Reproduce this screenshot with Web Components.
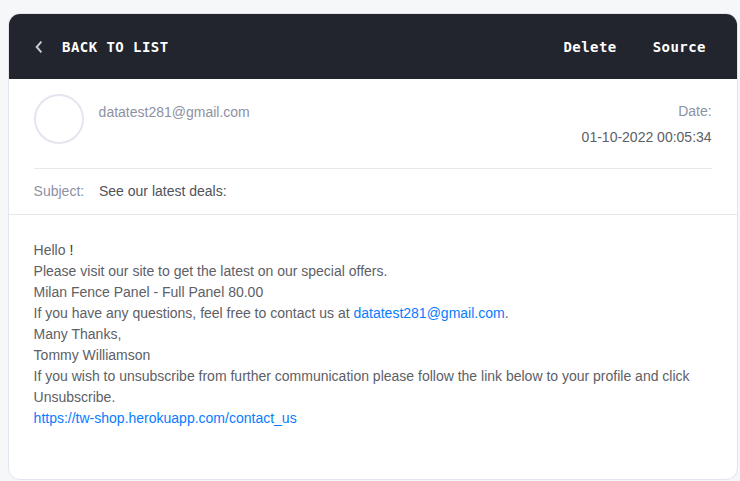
<!DOCTYPE html>
<html lang="en"><head><meta charset="utf-8"><title>Message</title>
<style>
html{height:100%;background:#f5f7f9}
body{margin:0;height:481px;overflow:hidden;padding:13px 2px 1px 8px;box-sizing:border-box;font:14px/21px "Liberation Sans",Arial,sans-serif;color:#5d6066}
</style></head><body>
<mail-card>
<mail-toolbar slot="toolbar"><span>BACK TO LIST</span><span slot="action">Delete</span><span slot="action">Source</span></mail-toolbar>
<mail-meta slot="meta"><span slot="from">datatest281@gmail.com</span><span slot="date">01-10-2022 00:05:34</span></mail-meta>
<mail-subject slot="subject">See our latest deals:</mail-subject>
<mail-body></mail-body>
</mail-card>
<script>
const define = (name, html) => customElements.define(name, class extends HTMLElement {
  constructor() {
    super();
    this.attachShadow({mode: 'open'}).innerHTML = html;
  }
});
define('mail-card', `<style>
:host{display:flex;flex-direction:column;height:467px;box-sizing:border-box;background:#fff;border:1px solid #e4e4ee;border-radius:12px;overflow:hidden}
</style><slot name="toolbar"></slot><slot name="meta"></slot><slot name="subject"></slot><slot></slot>`);
define('mail-toolbar', `<style>
:host{display:flex;align-items:center;height:65px;box-sizing:border-box;padding:1px 31px 0 25px;background:#22252d;color:#fff;font:bold 14px/20px "DejaVu Sans Mono",monospace;letter-spacing:.45px}
svg{display:block;width:10px;height:14px;margin:-1px 18px 0 0}
nav{display:flex;gap:36px;margin-left:auto}
</style><svg viewBox="0 0 10 14" fill="none" stroke="#c6c8d2" stroke-width="2"><path d="M7.4 1.7 2.7 7l4.7 5.3"/></svg><slot></slot><nav><slot name="action"></slot></nav>`);
define('mail-meta', `<style>
:host{display:flex;height:90px;box-sizing:border-box;margin:0 25px;padding-top:15px;border-bottom:1px solid #e7e7ee;color:#8d91a3}
i{box-sizing:border-box;width:50px;height:50px;border:2px solid #e5e4ef;border-radius:50%;margin-right:14.6px}
.from{padding-top:8px}
.date{display:flex;flex-direction:column;gap:5px;padding:7px .4px 0 0;margin-left:auto;text-align:right}
.value{color:#5d6066}
</style><i></i><div class="from"><slot name="from"></slot></div><div class="date"><span>Date:</span><span class="value"><slot name="date"></slot></span></div>`);
define('mail-subject', `<style>
:host{display:flex;align-items:center;flex:none;height:46px;box-sizing:border-box;padding:0 24.6px;border-bottom:1px solid #e7e7ee;color:#505259}
b{font-weight:400;color:#8d91a3;width:65.4px}
</style><b>Subject:</b><slot></slot>`);
define('mail-body', `<style>
:host{display:block;padding:25px 24.6px 0}
a{color:#087cff;text-decoration:none}
strong{font-weight:400;color:#33353b}
</style><div>Hello <strong>!</strong></div><div>Please visit our site to get the latest on our special offers.</div><div>Milan Fence Panel - Full Panel 80.00</div><div>If you have any questions, feel free to contact us at <a href="#">datatest281@gmail.com</a>.</div><div>Many Thanks,</div><div>Tommy Williamson</div><div>If you wish to unsubscribe from further communication please follow the link below to your profile and click Unsubscribe.</div><div><a href="#">https://tw-shop.herokuapp.com/contact_us</a></div>`);
</script></body></html>
